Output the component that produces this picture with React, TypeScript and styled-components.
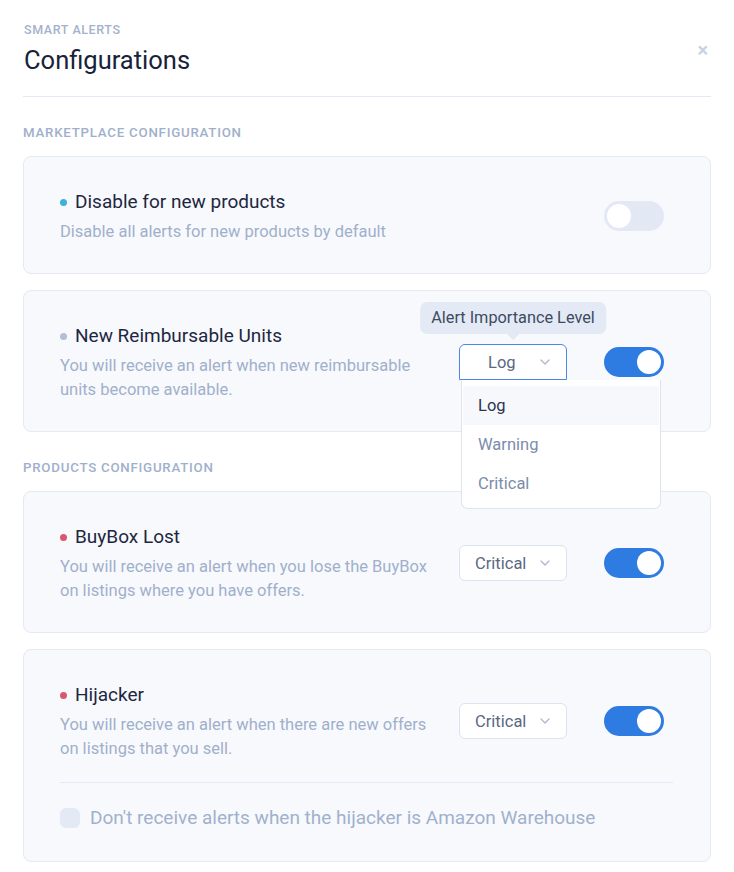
import React, { useState } from 'react'
import styled, { createGlobalStyle } from 'styled-components'

const GlobalStyle = createGlobalStyle`
	* {
		box-sizing: border-box;
	}
	body {
		margin: 0;
		background: #ffffff;
		font-family: Roboto, 'Liberation Sans', sans-serif;
		-webkit-font-smoothing: antialiased;
	}
`

type Level = 'Log' | 'Warning' | 'Critical'

type Alert = {
	id: string
	title: string
	desc: string
	dot: string
	enabled: boolean
	level?: Level
	open?: boolean
	extra?: string
}

const marketplace: Alert[] = [
	{
		id: 'new-products',
		title: 'Disable for new products',
		desc: 'Disable all alerts for new products by default',
		dot: '#3bb4d8',
		enabled: false,
	},
	{
		id: 'reimbursable',
		title: 'New Reimbursable Units',
		desc: 'You will receive an alert when new reimbursable units become available.',
		dot: '#b3bfd4',
		enabled: true,
		level: 'Log',
		open: true,
	},
]

const products: Alert[] = [
	{
		id: 'buybox',
		title: 'BuyBox Lost',
		desc: 'You will receive an alert when you lose the BuyBox on listings where you have offers.',
		dot: '#d9586d',
		enabled: true,
		level: 'Critical',
	},
	{
		id: 'hijacker',
		title: 'Hijacker',
		desc: 'You will receive an alert when there are new offers on listings that you sell.',
		dot: '#d9586d',
		enabled: true,
		level: 'Critical',
		extra: "Don't receive alerts when the hijacker is Amazon Warehouse",
	},
]

const levels: Level[] = ['Log', 'Warning', 'Critical']

function Chevron() {
	return (
		<svg width="10" height="6" viewBox="0 0 10 6" fill="none">
			<path d="M1 1l4 4 4-4" stroke="#a9b6cc" strokeWidth="1.2" strokeLinecap="round" strokeLinejoin="round" />
		</svg>
	)
}

function LevelSelect({ value, open }: { value: Level; open?: boolean }) {
	return (
		<S.SelectWrap>
			{open && <S.Tooltip>Alert Importance Level</S.Tooltip>}
			<S.Select $open={open}>
				<span>{value}</span>
				<Chevron />
			</S.Select>
			{open && (
				<S.Menu>
					{levels.map((l) => (
						<S.MenuItem key={l} $active={l === value}>
							{l}
						</S.MenuItem>
					))}
				</S.Menu>
			)}
		</S.SelectWrap>
	)
}

function AlertCard({ alert }: { alert: Alert }) {
	const [on, setOn] = useState(alert.enabled)
	return (
		<S.Card>
			<S.Row>
				<S.Text>
					<S.Title>
						<S.Dot $color={alert.dot} />
						{alert.title}
					</S.Title>
					<S.Desc>{alert.desc}</S.Desc>
				</S.Text>
				{alert.level && <LevelSelect value={alert.level} open={alert.open} />}
				<S.Toggle $on={on} onClick={() => setOn(!on)}>
					<S.Knob />
				</S.Toggle>
			</S.Row>
			{alert.extra && (
				<S.Extra>
					<S.Check />
					<span>{alert.extra}</span>
				</S.Extra>
			)}
		</S.Card>
	)
}

function App() {
	return (
		<S.Page>
			<GlobalStyle />
			<S.Header>
				<div>
					<S.Eyebrow>Smart Alerts</S.Eyebrow>
					<S.Heading>Configurations</S.Heading>
				</div>
				<S.Close>×</S.Close>
			</S.Header>
			<S.Section>
				<S.SectionTitle>Marketplace Configuration</S.SectionTitle>
				{marketplace.map((a) => (
					<AlertCard key={a.id} alert={a} />
				))}
			</S.Section>
			<S.Section>
				<S.SectionTitle>Products Configuration</S.SectionTitle>
				{products.map((a) => (
					<AlertCard key={a.id} alert={a} />
				))}
			</S.Section>
		</S.Page>
	)
}
export default App

const Page = styled.div`
	width: 734px;
	padding: 20px 23px 11px 23px;
`
const Header = styled.div`
	display: flex;
	justify-content: space-between;
	align-items: flex-start;
	padding: 0 1px 16px 1px;
	border-bottom: 1px solid #e3eaf5;
`
const Eyebrow = styled.div`
	font-size: 12.5px;
	line-height: 20px;
	font-weight: 500;
	letter-spacing: 0.6px;
	text-transform: uppercase;
	color: #a3b2cc;
`
const Heading = styled.h1`
	margin: 0;
	font-size: 25.5px;
	line-height: 40px;
	font-weight: 400;
	color: #18223a;
`
const Close = styled.div`
	margin-top: 24px;
	margin-right: 2px;
	font-size: 20px;
	line-height: 12px;
	font-weight: 700;
	color: #c8d2e2;
	cursor: pointer;
`
const Section = styled.div`
	display: flex;
	flex-direction: column;
	gap: 16px;
	padding-top: 26px;
`
const SectionTitle = styled.div`
	font-size: 13.3px;
	line-height: 20px;
	font-weight: 500;
	letter-spacing: 0.75px;
	text-transform: uppercase;
	color: #9fb0cc;
	margin-bottom: -3px;
`
const Card = styled.div`
	background: #f8f9fc;
	border: 1px solid #e5e9f1;
	border-radius: 8px;
	padding: 31px 36px 29px 36px;
`
const Row = styled.div`
	display: flex;
	align-items: center;
`
const Text = styled.div`
	flex: 1;
	min-width: 0;
	padding-top: 2px;
	& > div {
		max-width: 375px;
	}
`
const Title = styled.div`
	display: flex;
	align-items: center;
	font-size: 19px;
	line-height: 24px;
	color: #1d2741;
	margin-bottom: 6px;
`
const Dot = styled.span<{ $color: string }>`
	width: 7px;
	height: 7px;
	border-radius: 50%;
	background: ${({ $color }) => $color};
	margin: 1px 8px 0 0;
`
const Desc = styled.div`
	font-size: 16.5px;
	line-height: 24px;
	color: #9fb0cc;
`
const SelectWrap = styled.div`
	position: relative;
	width: 108px;
`
const Select = styled.div<{ $open?: boolean }>`
	height: 36px;
	display: flex;
	align-items: center;
	justify-content: space-between;
	padding: 0 16px 0 ${({ $open }) => ($open ? '28px' : '15px')};
	background: #ffffff;
	border: 1px solid ${({ $open }) => ($open ? '#4b88e6' : '#dbe3ef')};
	border-radius: ${({ $open }) => ($open ? '6px 6px 0 0' : '6px')};
	font-size: 16.5px;
	color: #5b6882;
	cursor: pointer;
`
const Tooltip = styled.div`
	position: absolute;
	bottom: calc(100% + 10px);
	left: 50%;
	transform: translateX(-50%);
	white-space: nowrap;
	padding: 0 11px;
	height: 32px;
	line-height: 32px;
	border-radius: 7px;
	background: #e3eaf5;
	font-size: 16.3px;
	color: #3e4a62;
	&::after {
		content: '';
		position: absolute;
		top: 100%;
		left: 50%;
		transform: translateX(-50%);
		border: 6px solid transparent;
		border-top: 6px solid #e3eaf5;
		border-bottom: 0;
	}
`
const Menu = styled.div`
	position: absolute;
	top: 100%;
	left: 2px;
	width: 200px;
	padding: 6px 1px 5px 1px;
	background: #ffffff;
	border: 1px solid #dfe4ec;
	border-top: none;
	border-radius: 0 0 7px 7px;
	z-index: 2;
`
const MenuItem = styled.div<{ $active?: boolean }>`
	height: 39px;
	line-height: 39px;
	padding-left: 15px;
	font-size: 16.5px;
	color: ${({ $active }) => ($active ? '#2b3650' : '#7d8cab')};
	background: ${({ $active }) => ($active ? '#f7f8fb' : '#ffffff')};
`
const Toggle = styled.div<{ $on: boolean }>`
	width: 60px;
	height: 30px;
	border-radius: 15px;
	margin: 0 10px 0 37px;
	padding: 3px;
	display: flex;
	justify-content: ${({ $on }) => ($on ? 'flex-end' : 'flex-start')};
	background: ${({ $on }) => ($on ? '#2e7be1' : '#e2e9f5')};
	cursor: pointer;
`
const Knob = styled.div`
	width: 24px;
	height: 24px;
	border-radius: 50%;
	background: #ffffff;
`
const Extra = styled.div`
	display: flex;
	align-items: center;
	gap: 10px;
	margin-top: 21px;
	padding-top: 23px;
	border-top: 1px solid #e3eaf5;
	margin-right: 1px;
	margin-bottom: 2px;
	font-size: 19px;
	line-height: 24px;
	color: #a0b1cd;
`
const Check = styled.div`
	width: 20px;
	height: 20px;
	border-radius: 6px;
	background: #e3eaf5;
`
const S = {
	Page,
	Header,
	Eyebrow,
	Heading,
	Close,
	Section,
	SectionTitle,
	Card,
	Row,
	Text,
	Title,
	Dot,
	Desc,
	SelectWrap,
	Select,
	Tooltip,
	Menu,
	MenuItem,
	Toggle,
	Knob,
	Extra,
	Check,
}
